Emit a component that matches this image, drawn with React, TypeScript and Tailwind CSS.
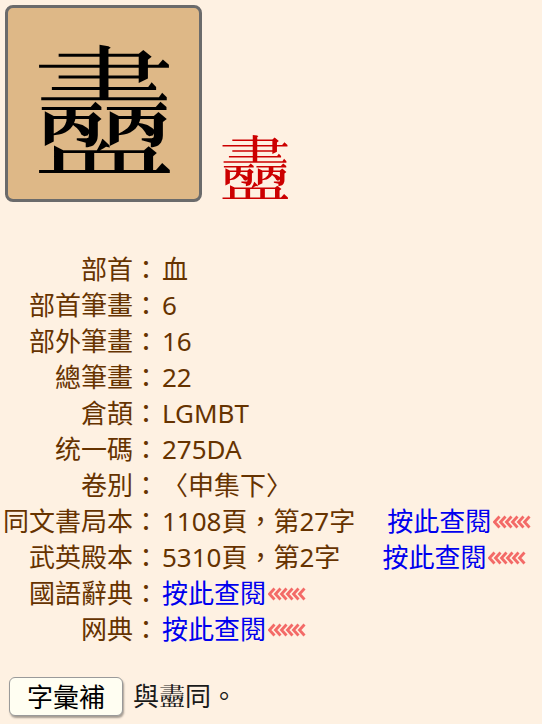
import React from 'react'

const CHAR = '\u{275DA}'

function Arrows() {
  const xs = [0, 6, 12, 18, 24, 30]
  return (
    <svg width="38" height="14" viewBox="0 0 38 14" className="inline-block align-middle ml-[2px] -mt-[4px]">
      {xs.map(x => (
        <path key={x} d={`M${x + 6.5} 1.5 L${x + 1.5} 7 L${x + 6.5} 12.5`} fill="none" stroke="#f04848" strokeWidth="2.8" strokeOpacity="0.8" />
      ))}
    </svg>
  )
}

function Link({ children }: { children: React.ReactNode }) {
  return (
    <span className="whitespace-nowrap">
      <a className="text-[#0000ee] cursor-pointer">{children}</a>
      <Arrows />
    </span>
  )
}

const rows: { label: string; value: React.ReactNode }[] = [
  { label: '部首', value: '血' },
  { label: '部首筆畫', value: '6' },
  { label: '部外筆畫', value: '16' },
  { label: '總筆畫', value: '22' },
  { label: '倉頡', value: 'LGMBT' },
  { label: '统一碼', value: '275DA' },
  { label: '卷別', value: '〈申集下〉' },
  {
    label: '同文書局本',
    value: (
      <>
        1108頁，第27字<span className="inline-block w-[32px]" />
        <Link>按此查閱</Link>
      </>
    ),
  },
  {
    label: '武英殿本',
    value: (
      <>
        5310頁，第2字<span className="inline-block w-[42px]" />
        <Link>按此查閱</Link>
      </>
    ),
  },
  { label: '國語辭典', value: <Link>按此查閱</Link> },
  { label: '网典', value: <Link>按此查閱</Link> },
]

export default function App() {
  return (
    <div lang="zh-Hant-TW" className="min-h-screen bg-[#fef1e2] text-[#663300] font-['Noto_Sans','Noto_Sans_CJK_TC',sans-serif] text-[26px]">
      <div className="flex items-end pt-[5px] pl-[5px]">
        <div className="w-[197px] h-[197px] rounded-[8px] border-[3px] border-[#6b6b6b] bg-[#deb887] flex items-center justify-center">
          <span className="text-black text-[144px] leading-[150px] font-['Noto_Sans_CJK_TC',serif]">{CHAR}</span>
        </div>
        <span className="ml-[17px] mb-[1px] text-[#cc0000] text-[72px] leading-none font-['Noto_Sans_CJK_TC',serif]">{CHAR}</span>
      </div>

      <div className="mt-[49px]">
        {rows.map(r => (
          <div key={r.label} className="flex h-[36px] items-center leading-[36px]">
            <div className="w-[133px] text-right whitespace-nowrap">{r.label}</div>
            <div className="w-[26px] text-center">：</div>
            <div className="pl-[3px] whitespace-nowrap">{r.value}</div>
          </div>
        ))}
      </div>

      <div className="flex items-center mt-[30px] pl-[9px]">
        <button className="h-[39px] px-[17px] rounded-[6px] border border-[#9a9a9a] bg-[#fffef2] text-black text-[26px] leading-none shadow-[1px_2px_2px_rgba(0,0,0,0.35)]">
          字彙補
        </button>
        <span className="ml-[10px] text-[#1a1a1a]">與{CHAR}同。</span>
      </div>
    </div>
  )
}
